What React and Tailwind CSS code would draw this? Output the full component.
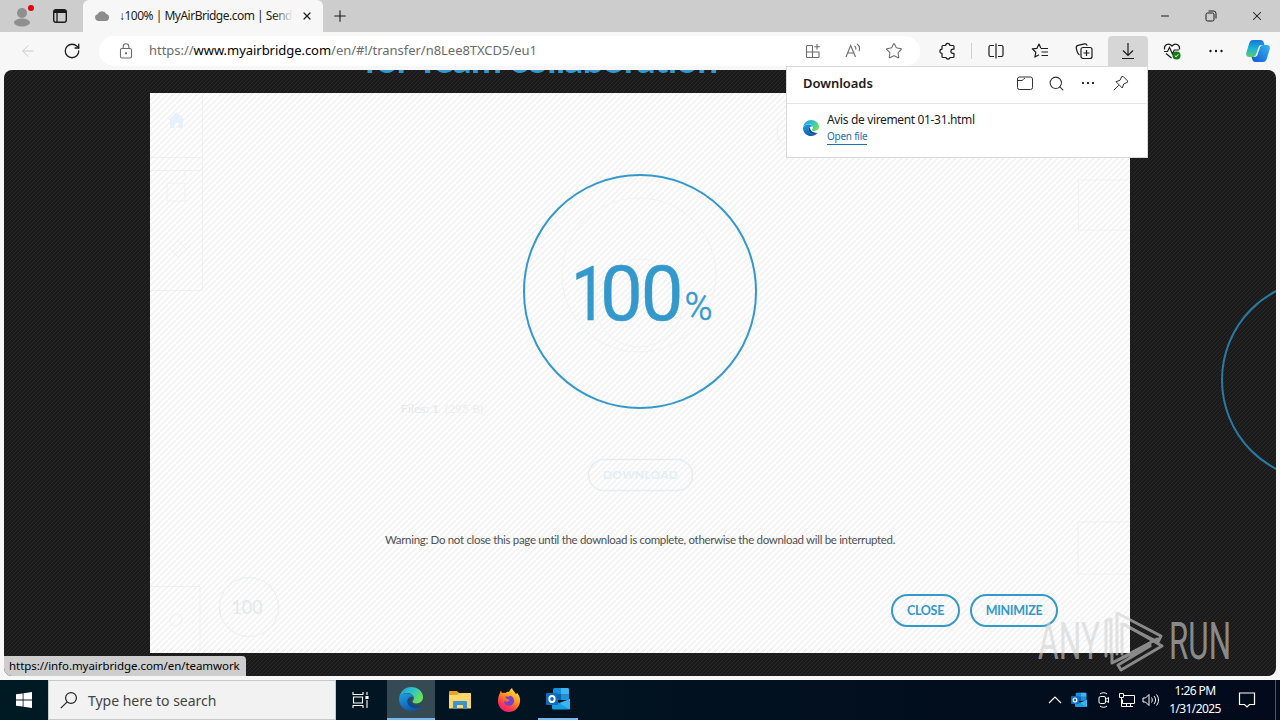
import React from 'react';
import {
  ArrowLeft, RotateCw, Star, Search, Minus, X, Plus,
} from 'lucide-react';

const EdgeLogo = ({ id, className }) => (
  <svg viewBox="0 0 24 24" className={className}>
    <defs>
      <linearGradient id={`${id}-a`} x1="0" y1="0" x2="1" y2="0.5">
        <stop offset="0" stopColor="#1b9de2" />
        <stop offset="0.55" stopColor="#2fc3c5" />
        <stop offset="1" stopColor="#6be05a" />
      </linearGradient>
      <linearGradient id={`${id}-b`} x1="0" y1="0" x2="0.6" y2="1">
        <stop offset="0" stopColor="#1fa0e8" />
        <stop offset="1" stopColor="#0c57a6" />
      </linearGradient>
    </defs>
    <path d="M0.2 11C1 4.600 6 0 12.200 0 19 0 24 4.800 24 10.300c0 4-3.200 6.200-6.500 6.200-2.600 0-4-1-4-2 0-.8 1.300-1.200 1.300-3.200C14.800 8 11.500 6 8 6 4.500 6 1.300 8 .2 11z" fill={`url(#${id}-a)`} />
    <path d="M.1 11.500C1 8.500 4.200 6.300 7.600 6.300c3.400 0 6 1.400 6.900 3.700-3.300-1-6 1.200-6 4.200 0 4.200 3.600 7 7.800 7 2.300 0 4.600-.9 6.100-1.900C20.200 22.300 16.300 24 12.300 24 5.500 24-.6 18.600.1 11.500z" fill={`url(#${id}-b)`} />
    <path d="M8.500 14.200c0-1.600.8-3 2-3.800-.4 5.600 4.500 9.200 11.900 8.900-1.600 1.100-3.800 1.900-6.100 1.900-4.200 0-7.800-2.800-7.800-7z" fill="#0d4a8d" />
  </svg>
);

const CopilotLogo = () => (
  <svg viewBox="0 0 24 24" className="h-6 w-6">
    <defs>
      <linearGradient id="cp-a" x1="0" y1="0" x2="0" y2="1">
        <stop offset="0" stopColor="#1873d8" />
        <stop offset="0.5" stopColor="#18b4d4" />
        <stop offset="1" stopColor="#63c96b" />
      </linearGradient>
      <linearGradient id="cp-b" x1="1" y1="0" x2="0" y2="1">
        <stop offset="0" stopColor="#35b7ee" />
        <stop offset="1" stopColor="#1455d6" />
      </linearGradient>
    </defs>
    <path d="M7 1h7.500c2 0 2.800 1 3.400 3l.6 2h-3c-1.700 0-2.500.7-3 2.400L10 15.500C9.500 17 8.600 18 7 18H3.200C.6 18-.3 16 .4 13.500L3.300 4C4 2 5 1 7 1z" fill="url(#cp-a)" />
    <path d="M17 23H9.500c-2 0-2.800-1-3.400-3l-.6-2h3c1.700 0 2.500-.7 3-2.400L14 8.500C14.500 7 15.400 6 17 6h3.800c2.600 0 3.500 2 2.800 4.500L20.700 20c-.7 2-1.700 3-3.700 3z" fill="url(#cp-b)" />
  </svg>
);

const OutlookLogo = ({ className }) => (
  <svg viewBox="0 0 24 22" className={className}>
    <path d="M7 1.500A1.500 1.500 0 0 1 8.500 0h13A1.500 1.500 0 0 1 23 1.500V12H7z" fill="#1490df" />
    <path d="M15 0h6.500A1.500 1.500 0 0 1 23 1.500V6h-8z" fill="#3fb4ee" />
    <path d="M7 6h8v6H7z" fill="#0a64ad" />
    <path d="M15 6h8v6h-8z" fill="#1f8fd6" />
    <path d="M6 11l9 5 9-5v9a1.500 1.500 0 0 1-1.500 1.500h-15A1.500 1.500 0 0 1 6 20z" fill="#1b9de2" />
    <path d="M24 11v9a1.500 1.500 0 0 1-.6 1.200L13 15z" fill="#35b8f1" />
    <rect x="0" y="5" width="12" height="12" rx="1" fill="#0f6cbd" />
    <ellipse cx="6" cy="11" rx="2.700" ry="3" fill="none" stroke="#fff" strokeWidth="1.800" />
  </svg>
);

const Toolbar = () => (
  <div className="flex h-[38px] items-center bg-[#f7f7f7]">
    <ArrowLeft className="ml-[19px] h-[18px] w-[18px] text-[#c9c9c9]" strokeWidth={1.3} />
    <RotateCw className="ml-[26px] h-[18px] w-[18px] text-[#1b1b1b]" strokeWidth={1.7} />
    <div className="ml-[18px] flex h-[30px] w-[821px] items-center rounded-full bg-white text-[#6b6b6b]">
      <svg viewBox="0 0 16 16" className="ml-[19px] h-4 w-4" fill="none" stroke="currentColor" strokeWidth="1.100">
        <rect x="2.500" y="5.500" width="11" height="9.500" rx="1.500" />
        <path d="M5.200 5.500V3.600a2.800 2.800 0 0 1 5.600 0v1.900" />
        <circle cx="8" cy="10.300" r=".6" fill="currentColor" />
      </svg>
      <div className="ml-[15px] w-[642px] whitespace-nowrap text-[13px] tracking-[-0.035px]">
        https://<span className="text-black">www.myairbridge.com</span>/en/#!/transfer/n8Lee8TXCD5/eu1
      </div>
      <div className="ml-[14px] flex items-center gap-6">
        <svg viewBox="0 0 16 16" className="h-4 w-4" fill="none" stroke="currentColor" strokeWidth="1.100">
          <path d="M7.500 2.500h-5a1 1 0 0 0-1 1v10a1 1 0 0 0 1 1h10.500a1 1 0 0 0 1-1v-4.500H1.500M7.500 2.500v12M12 1v5.500M9.200 3.700h5.600" />
        </svg>
        <svg viewBox="0 0 16 16" className="h-4 w-4" fill="none" stroke="currentColor" strokeWidth="1.100">
          <path d="M1 14L5.700 2.500 10.500 14M2.700 10h6M9.500 3c1.200.8 1.600 2.200 1.200 3.600M12 1c2.200 1.500 3 4.500 2 7" />
        </svg>
        <Star className="h-[18px] w-[18px]" strokeWidth={1.4} />
      </div>
    </div>
    <div className="ml-[18px] flex items-center text-[#1b1b1b]">
      <svg viewBox="0 0 18 18" className="h-[18px] w-[18px]" fill="none" stroke="currentColor" strokeWidth="1.200" strokeLinejoin="round">
        <path d="M5 3.500h2.700a2.100 2.100 0 0 1 4.200 0H15a1 1 0 0 1 1 1v2.700h-1a2.100 2.100 0 0 0 0 4.200h1v3.100a1 1 0 0 1-1 1h-2.900a2.200 2.200 0 0 1-4.200 0H5a1 1 0 0 1-1-1v-3.100a2.100 2.100 0 0 1 0-4.200V4.500a1 1 0 0 1 1-1z" />
      </svg>
      <div className="ml-[15px] h-4 w-px bg-[#d0d0d0]" />
      <svg viewBox="0 0 18 18" className="ml-[15px] h-[18px] w-[18px]" fill="none" stroke="currentColor" strokeWidth="1.200">
        <path d="M7 3.500H3.500a1.500 1.500 0 0 0-1.500 1.500v8a1.500 1.500 0 0 0 1.500 1.500H7M11 3.500h3.500A1.500 1.500 0 0 1 16 5v8a1.500 1.500 0 0 1-1.500 1.500H11M9 1.500v15" />
      </svg>
      <svg viewBox="0 0 18 18" className="ml-[26px] h-[18px] w-[18px]" fill="none" stroke="currentColor" strokeWidth="1.200" strokeLinejoin="round">
        <path d="M9.800 6L8 2 6 6.300l-4.700.6 3.500 3.300-.9 4.900L8 12.700M9.800 6.500H17M10.500 10H17M10.500 13.500H17" />
      </svg>
      <svg viewBox="0 0 18 18" className="ml-[26px] h-[18px] w-[18px]" fill="none" stroke="currentColor" strokeWidth="1.200">
        <rect x="6" y="5.500" width="11" height="11" rx="2" />
        <path d="M11.500 8v6M8.500 11h6M4.500 13C2.500 12 1.800 9 1.300 6.200 1 4.500 1.800 3.600 3 3.300l6.500-1.400c1.300-.2 2.300.3 2.700 1.700" />
      </svg>
      <div className="ml-[15px] flex h-[30px] w-10 items-center justify-center rounded-t-[4px] bg-[#d6d6d6]">
        <svg viewBox="0 0 16 18" className="h-[18px] w-4" fill="none" stroke="currentColor" strokeWidth="1.200">
          <path d="M8 1v12M3 8.500l5 5 5-5M2 16.500h12" />
        </svg>
      </div>
      <svg viewBox="0 0 18 18" className="ml-[15px] h-[18px] w-[18px]" fill="none" stroke="currentColor" strokeWidth="1.200">
        <path d="M1.500 7.500C.8 3 5.500 0 9 4c3.500-4 8.200-1 7.500 3.500M1 9.500h3.500l2-4 3 6.500 1.800-4H16M3 11.500L8.500 16" />
        <circle cx="13.500" cy="13.500" r="4" fill="#107c10" stroke="none" />
        <path d="M11.800 13.600l1.300 1.200 2.200-2.500" stroke="#fff" strokeWidth="1" />
      </svg>
      <svg viewBox="0 0 16 4" className="ml-[27px] h-1 w-4" fill="currentColor">
        <circle cx="2.500" cy="2" r="1.200" /><circle cx="8" cy="2" r="1.200" /><circle cx="13.500" cy="2" r="1.200" />
      </svg>
      <div className="ml-[22px]"><CopilotLogo /></div>
    </div>
  </div>
);

const TabStrip = () => (
  <div className="flex h-8 items-center bg-[#cdcdcd] text-[#1b1b1b]">
    <svg viewBox="0 0 24 24" className="ml-[10px] h-6 w-6">
      <circle cx="12" cy="9" r="5" fill="#8f8f8f" />
      <ellipse cx="12" cy="18.500" rx="8" ry="4" fill="#8f8f8f" />
      <circle cx="21" cy="4" r="3" fill="#e3000f" />
    </svg>
    <svg viewBox="0 0 16 16" className="ml-[18px] h-4 w-4" fill="none" stroke="currentColor">
      <rect x="1.700" y="1.700" width="12.600" height="12.600" rx="2.300" strokeWidth="1.400" />
      <path d="M2 3.500h12" strokeWidth="3" /><path d="M5 4v10" strokeWidth="1.300" />
    </svg>
    <div className="ml-[15px] flex h-8 w-[240px] items-center rounded-t-[6px] bg-[#f7f7f7]">
      <svg viewBox="0 0 16 12" className="ml-[11px] h-3 w-4" fill="#8d8d8d">
        <path d="M4 11a3.500 3.500 0 0 1-.5-6.800A5 5 0 0 1 12.500 4a3.600 3.600 0 0 1-.5 7z" />
      </svg>
      <div className="relative ml-[9px] w-[174px] whitespace-nowrap text-[12px] tracking-[-0.500px]">
        ↓100% | MyAirBridge.com | Send
        <div className="absolute inset-y-0 right-0 w-5 bg-gradient-to-r from-transparent to-[#f7f7f7]" />
      </div>
      <X className="ml-[8px] h-3 w-3" strokeWidth={2.4} />
    </div>
    <Plus className="ml-[8px] h-[18px] w-[18px]" strokeWidth={1.5} />
    <div className="ml-auto flex items-center pr-4">
      <Minus className="h-3 w-3" strokeWidth={2} />
      <svg viewBox="0 0 12 12" className="ml-[34px] h-3 w-3" fill="none" stroke="currentColor">
        <rect x="1" y="3" width="8" height="8" rx="1.500" />
        <path d="M3.500 1h5A2.500 2.500 0 0 1 11 3.500v5" />
      </svg>
      <X className="ml-[33px] h-[14px] w-[14px]" strokeWidth={1.8} />
    </div>
  </div>
);

const DownloadsPopup = () => (
  <div className="absolute left-[786px] top-[66px] z-20 h-[92px] w-[362px] border border-[#d9d9d9] bg-white text-[#1b1b1b]">
    <div className="flex h-[37px] items-center border-b border-[#e6e6e6] pl-4 pr-[18px] pb-[4px]">
      <span className="pt-px text-[13px] font-semibold tracking-[-0.050px]">Downloads</span>
      <div className="ml-auto flex items-center">
        <svg viewBox="0 0 18 16" className="h-4 w-[18px]" fill="none" stroke="#333">
          <rect x="1.500" y="2" width="15" height="12.500" rx="2" />
          <path d="M1.500 5.500H6c1.200 0 1.500-2 3-2.500" />
        </svg>
        <Search className="ml-[14px] h-[17px] w-[17px] text-[#333]" strokeWidth={1.5} />
        <svg viewBox="0 0 16 4" className="ml-[15px] h-1 w-4"><circle cx="3" cy="2" r="1.100" /><circle cx="8" cy="2" r="1.100" /><circle cx="13" cy="2" r="1.100" /></svg>
        <svg viewBox="0 0 16 16" className="ml-[17px] h-4 w-4" fill="none" stroke="#333" strokeLinejoin="round">
          <path d="M10 1.300L14.700 6l-.3 1.300-3.700 1.700-1.400 4L3 6.700l4-1.400L8.700 1.600zM5.700 10.300L.8 15.200" />
        </svg>
      </div>
    </div>
    <div className="flex items-center pl-4 pt-[7px]">
      <EdgeLogo id="dl" className="h-4 w-4" />
      <div className="ml-2 flex flex-col items-start">
        <span className="text-[12px] leading-[18px] tracking-[-0.350px]">Avis de virement 01-31.html</span>
        <span className="border-b border-[#1d6fb0] text-[10px] leading-[15px] tracking-[-0.250px] text-[#1d6fb0]">Open file</span>
      </div>
    </div>
  </div>
);

// Page content that shows faintly through the transfer overlay
const FadedPage = () => (
  <svg className="pointer-events-none absolute left-0 top-0 h-[560px] w-[980px]" viewBox="0 0 980 560" fill="none" stroke="#f0f0f0">
    <path d="M52.500 0v198M0 64.500h52M0 77.500h52M0 197.500h52M0 493.500h50v65M928.500 87v50H980M928.500 87H980M980 429h-52v52h52" />
    <path d="M17 90h18v18H17zM35 84v-6M20 156l8-8 8 8-8 8z" />
    <path d="M18 27l8.500-8 8.500 8h-2v8h-4.500v-5h-4v5H20v-8z" fill="#e6f1fb" stroke="none" />
    <circle cx="489" cy="182" r="77" stroke="#f2f2f2" />
    <circle cx="489" cy="210" r="44" stroke="#f2f2f2" />
    <circle cx="99" cy="514" r="29.500" stroke="#eaeeee" />
    <circle cx="26" cy="527" r="6" />
    <circle cx="642" cy="39" r="15" />
    <rect x="438.500" y="366.500" width="104" height="31" rx="15.500" stroke="#e8ecee" strokeWidth="1.500" />
    <g stroke="none" fill="#e4e8ea">
      <text x="251" y="320" fontSize="12" textLength="38">Files: 1</text>
      <text x="295" y="320" fontSize="12" fill="#eeeeee">(295 B)</text>
      <text x="490.500" y="386" fontSize="12" fontWeight="700" fill="#e3eef6" textAnchor="middle" textLength="75">DOWNLOAD</text>
      <text x="97" y="521" fontSize="20" textAnchor="middle" textLength="31" lengthAdjust="spacingAndGlyphs">100</text>
    </g>
  </svg>
);

const TransferOverlay = () => (
  <div className="relative ml-[146px] mt-[23px] flex h-[560px] w-[980px] flex-col items-center bg-white bg-[linear-gradient(135deg,#f4f4f4_0%,#f4f4f4_18%,#ffffff_18%,#ffffff_50%,#f4f4f4_50%,#f4f4f4_68%,#ffffff_68%)] bg-[length:6px_6px] font-[Lato,'Open_Sans',sans-serif]">
    <FadedPage />
    <div className="relative mt-[81px] flex h-[235px] w-[234px] items-baseline justify-center rounded-full border-2 border-[#3399cc] pr-[6px] pt-[73px] font-[Roboto,sans-serif] text-[#3399cc]">
      <div className="flex text-[76px] leading-[90px] tracking-[-2px] [-webkit-text-stroke:0.400px_#3399cc]">
        <span className="mr-[-5px] inline-block origin-right scale-x-[0.82]">1</span>
        <span>00</span>
      </div>
      <span className="ml-[3px] text-[38px] font-light leading-none tracking-[-3px] [-webkit-text-stroke:0.500px_#3399cc]">%</span>
    </div>
    <p className="mt-[122px] whitespace-nowrap text-[11.500px] leading-[18px] text-[#505050] tracking-[-0.320px]">
      Warning: Do not close this page until the download is complete, otherwise the download will be interrupted.
    </p>
    <div className="mr-[72px] mt-[45px] flex gap-[10px] self-end text-[12.500px] font-bold tracking-[-0.300px] text-[#3399cc]">
      <button className="h-[33px] w-[69px] rounded-full border-2 border-[#3399cc] pt-px">CLOSE</button>
      <button className="h-[33px] w-[88px] rounded-full border-2 border-[#3399cc] pt-px">MINIMIZE</button>
    </div>
  </div>
);

const AnyRunMark = () => (
  <svg viewBox="0 0 200 70" className="absolute left-[1035px] top-[606px] z-10 h-[70px] w-[200px] opacity-60" fontFamily="Roboto, sans-serif">
    <g fill="#d2d2d2">
      <text x="3" y="53" fontSize="52" textLength="62" lengthAdjust="spacingAndGlyphs">ANY</text>
      <text x="134" y="53" fontSize="52" textLength="62" lengthAdjust="spacingAndGlyphs">RUN</text>
    </g>
    <g fill="none" stroke="#d2d2d2" strokeWidth="3" strokeLinejoin="round" strokeLinecap="round">
      <path d="M71 50V15l5-2v34M82 48V7l44 23-3 6-36-18v30" />
      <path d="M89 18l38 22-41 24-3-5 32-19M77 57v-6M77 57l45-24M77 46v11l38-18" />
    </g>
  </svg>
);

const Taskbar = () => (
  <div className="flex h-10 items-center bg-gradient-to-r from-[#001a24] to-[#020a1c] text-white">
    <div className="flex h-10 w-12 items-center justify-center">
      <svg viewBox="0 0 16 16" className="h-4 w-4" fill="#fff">
        <path d="M0 2.300L6.700 1.400v6.200H0zM7.500 1.300L16 0v7.600H7.500zM0 8.400h6.700v6.200L0 13.700zM7.500 8.400H16V16l-8.500-1.300z" />
      </svg>
    </div>
    <div className="flex h-10 w-72 items-center border border-[#c9c9c9] bg-[#f2f2f2] text-[#444]">
      <svg viewBox="0 0 18 18" className="ml-[11px] h-[18px] w-[18px]" fill="none" stroke="#222" strokeWidth="1.200">
        <circle cx="11" cy="7" r="5.400" />
        <path d="M7.200 10.800L.8 17.200" />
      </svg>
      <span className="ml-[10px] text-[14px] tracking-[-0.030px]">Type here to search</span>
    </div>
    <div className="flex h-10 w-[51px] items-center justify-center">
      <svg viewBox="0 0 17 16" className="ml-[-3px] h-4 w-[17px]" fill="none" stroke="#fff" strokeWidth="1.100">
        <path d="M1 0v2.500h10V0M1 16v-2.500h10V16M1.500 5h9v6h-9zM15 0v3M15 8v8" />
        <path d="M14 4.500h2v2h-2z" fill="#fff" />
      </svg>
    </div>
    <div className="flex h-10 w-12 items-center justify-center border-b-2 border-[#76b9ed] bg-[#354a52]">
      <EdgeLogo id="tb" className="h-6 w-6" />
    </div>
    <div className="flex h-10 w-[50px] items-center justify-center">
      <svg viewBox="0 0 22 20" className="h-5 w-[22px]">
        <path d="M0 2a1 1 0 0 1 1-1h7l2 2h11a1 1 0 0 1 1 1v14H0z" fill="#e9a520" />
        <path d="M0 5h8l2-2h11a1 1 0 0 1 1 1v14.500H0z" fill="#ffd76a" />
        <path d="M4 19v-7a1 1 0 0 1 1-1h12a1 1 0 0 1 1 1v7h-4v-4H8v4z" fill="#3b93d3" />
      </svg>
    </div>
    <div className="flex h-10 w-12 items-center justify-center">
      <svg viewBox="0 0 24 24" className="h-6 w-6">
        <defs>
          <linearGradient id="ff" x1="0.8" y1="0" x2="0.2" y2="1">
            <stop offset="0" stopColor="#fff044" />
            <stop offset="0.45" stopColor="#ff8a1e" />
            <stop offset="0.75" stopColor="#ff3750" />
            <stop offset="1" stopColor="#eb1a8b" />
          </linearGradient>
        </defs>
        <path d="M3 5c.2-1.200.7-2 1-2.300.2 1 .8 2 1.700 2.400 1-.4 2-.4 3-.1C9.500 4 10.500 3.500 12 4c.7-2 2-3.300 3-4 .2 2 3 4 4 6.200.6-.3.800-1 .8-1.700 2.700 3 3.700 6 3.200 9.500C22 20 17.500 24 12 24 5.500 24 1 19 1 13 1 10 1.700 7 3 5z" fill="url(#ff)" />
        <path d="M8 9c2-1 3.500.3 5-1.200 2.500.4 4 2.500 4 5 0 3-2.300 5-5 5-3 0-5-2-5-4.500 2.300.8 4.500.2 5.500-1.400C11 11 9.500 11.300 8 9z" fill="#7542c8" />
      </svg>
    </div>
    <div className="ml-[5px] flex h-10 w-10 items-center justify-center border-b-2 border-[#76b9ed]">
      <OutlookLogo className="h-[22px] w-6" />
    </div>
    <div className="ml-auto flex items-center">
      <svg viewBox="0 0 14 14" className="h-[14px] w-[14px]" fill="none" stroke="#fff" strokeWidth="1.200">
        <path d="M1 10l6-6 6 6" />
      </svg>
      <OutlookLogo className="ml-[9px] h-4 w-4" />
      <svg viewBox="0 0 14 16" className="ml-[10px] h-4 w-[14px]" fill="none" stroke="#fff">
        <rect x="2" y="4.500" width="6.500" height="7" rx="1.500" />
        <path d="M8.500 7.500l3-2v5l-3-2M3 2c2-1.700 5-1.700 7 0M3 14c2 1.700 5 1.700 7 0" />
      </svg>
      <svg viewBox="0 0 18 16" className="ml-[7px] h-4 w-[18px]" fill="none" stroke="#fff">
        <path d="M5.500 3.500h11v8h-12v-4M8.500 11.500v3M12.500 11.500v3M6 14.500h9M1.500 1.500h4v4h-4zM3.500 5.500v9h3" />
      </svg>
      <svg viewBox="0 0 18 16" className="ml-[6px] h-4 w-[18px]" fill="none" stroke="#fff">
        <path d="M1 6v4h2.500L7 13.500v-11L3.500 6zM9.500 5.500c1 1.500 1 3.500 0 5M12 4c2 2.500 2 5.500 0 8M14.500 2.500c2.700 3.500 2.700 7.500 0 11" />
      </svg>
      <div className="ml-[7px] w-[56px] whitespace-nowrap text-center text-[12px] leading-[18px] tracking-[-0.600px]">
        <div>1:26 PM</div>
        <div>1/31/2025</div>
      </div>
      <svg viewBox="0 0 18 18" className="ml-[15px] mr-[19px] h-[18px] w-[18px]" fill="none" stroke="#fff" strokeWidth="1.200">
        <path d="M1.500 2h15v11.500h-5L9 16l-2.500-2.500h-5z" />
      </svg>
      <div className="h-10 w-px bg-[#4a5560]" />
      <div className="w-1" />
    </div>
  </div>
);

export default function App() {
  return (
    <div className="relative h-[720px] w-[1280px] overflow-hidden bg-[#f7f7f7] font-['Noto_Sans',sans-serif]">
      <TabStrip />
      <Toolbar />
      <div className="relative mx-1 mb-1 flex h-[606px] overflow-hidden rounded-lg bg-[#1b1b1b] bg-[linear-gradient(135deg,#292929_0%,#292929_15%,#1a1a1a_15%,#1a1a1a_50%,#292929_50%,#292929_65%,#1a1a1a_65%)] bg-[length:4px_4px]">
        <div className="absolute left-[360px] top-[-33px] whitespace-nowrap font-[Lato,sans-serif] text-[37px] font-bold leading-[44px] tracking-[-0.600px] text-[#3399cc]">
          for Team collaboration
        </div>
        <div className="absolute left-[1217px] top-[209px] h-[202px] w-[202px] rounded-full border-2 border-[#287aa3]" />
        <TransferOverlay />
        <div className="absolute bottom-0 left-0 h-5 w-[242px] whitespace-nowrap rounded-tr-[4px] bg-[#cdcdcd] pl-[5px] text-[11.500px] leading-[19px] tracking-[-0.060px] text-black">
          https://info.myairbridge.com/en/teamwork
        </div>
      </div>
      <Taskbar />
      <DownloadsPopup />
      <AnyRunMark />
    </div>
  );
}
